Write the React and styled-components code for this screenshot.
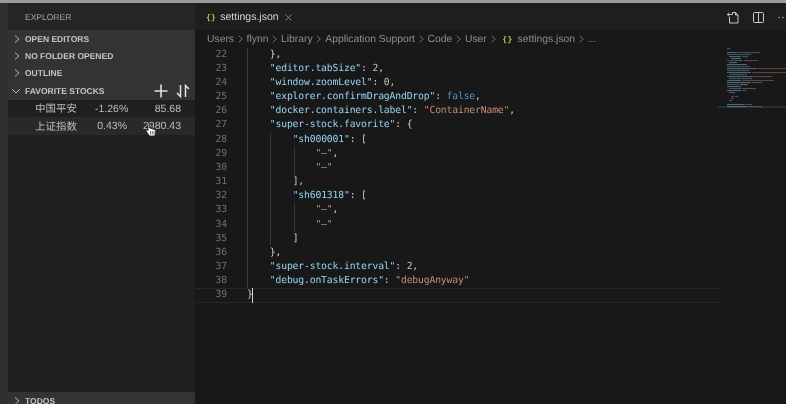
import { Fragment } from 'react';
import styled, { createGlobalStyle } from 'styled-components';

const GlobalStyle = createGlobalStyle`
  html, body {
    margin: 0;
    padding: 0;
    background: #181819;
    text-rendering: geometricPrecision;
  }
`;

const Window = styled.div`
  width: 786px;
  height: 404px;
  overflow: hidden;
  display: flex;
  flex-direction: column;
  background: #181819;
  font-family: "Liberation Sans", Arial, sans-serif;
  position: relative;
  filter: blur(0.3px);
`;

const TitleEdge = styled.div`
  height: 3px;
  flex: none;
  background: #9a9a9a;
`;

const Body = styled.div`
  flex: 1;
  min-height: 0;
  display: flex;
`;

const ActivityBar = styled.div`
  width: 8px;
  flex: none;
  background: #2e2f2f;
`;

const Sidebar = styled.aside`
  width: 187px;
  flex: none;
  display: flex;
  flex-direction: column;
  overflow: hidden;
  background: #1f1f20;
`;

const SidebarTitle = styled.div`
  height: 27px;
  flex: none;
  display: flex;
  align-items: center;
  padding: 1px 0 0 17px;
  box-sizing: border-box;
  background: #252526;
  color: #a6a6a6;
  font-size: 8.5px;
`;

const SectionRow = styled.div`
  height: 17.4px;
  flex: none;
  display: flex;
  align-items: center;
  background: #323333;
  color: #c4c4c4;
  font-size: 8.5px;
  font-weight: 700;
  position: relative;
`;

const Chevron = styled.svg`
  width: 17px;
  height: 12px;
  flex: none;
`;

const HeaderActions = styled.div`
  position: absolute;
  right: 5px;
  top: 2px;
  display: flex;
  align-items: center;
  gap: 8px;
`;

const StockList = styled.div`
  height: 292.5px;
  flex: none;
  padding-top: 0.5px;
  box-sizing: border-box;
`;

const StockRow = styled.div`
  height: 17.4px;
  display: grid;
  grid-template-columns: 60px 32px 1fr;
  align-items: center;
  padding-left: 27px;
  color: #bdbdbd;
  font-size: 10.5px;
  background: ${({ hovered }) => (hovered ? '#28292a' : 'transparent')};
`;

const StockName = styled.span`
  font-family: "Noto Sans CJK SC", "Liberation Sans", sans-serif;
  font-size: 10.5px;
`;

const StockChange = styled.span`
  text-align: right;
`;

const StockPrice = styled.span`
  text-align: right;
  padding-right: 14px;
`;

const Editor = styled.main`
  flex: 1;
  min-width: 0;
  display: flex;
  flex-direction: column;
  background: #181819;
`;

const TabBar = styled.div`
  height: 27px;
  flex: none;
  display: flex;
  align-items: center;
  justify-content: space-between;
  background: #1e1e1f;
`;

const Tab = styled.div`
  display: flex;
  align-items: center;
  gap: 4px;
  padding: 1px 0 0 11px;
  color: #d6d6d6;
  font-size: 10.5px;
`;

const JsonBraces = styled.span`
  color: #c5c04a;
  font-family: "DejaVu Sans Mono", monospace;
  font-size: 8px;
  font-weight: 700;
  letter-spacing: 0.3px;
`;

const CloseMark = styled.svg`
  width: 7px;
  height: 7px;
  margin-left: 2px;
`;

const TabActions = styled.div`
  display: flex;
  align-items: center;
  gap: 14px;
  padding-top: 1px;
`;

const Breadcrumbs = styled.div`
  height: 16px;
  flex: none;
  display: flex;
  align-items: center;
  padding: 2px 0 0 12px;
  box-sizing: border-box;
  color: #8f8f8f;
  font-size: 10.35px;
  white-space: nowrap;
`;

const Separator = styled.svg`
  width: 5px;
  height: 8px;
  margin: 0 3.8px;
  flex: none;
`;

const CrumbBraces = styled(JsonBraces)`
  margin: 0 5px 0 3px;
`;

const EditorBody = styled.div`
  flex: 1;
  min-height: 0;
  display: flex;
`;

const Code = styled.div`
  width: 523px;
  flex: none;
  padding-top: 1.5px;
`;

const Line = styled.div`
  height: 14.18px;
  display: flex;
  font-family: "DejaVu Sans Mono", Menlo, monospace;
  font-size: 9.72px;
  letter-spacing: -0.15px;
  line-height: 14.18px;
  white-space: pre;
  box-sizing: border-box;
  ${({ active }) => active && `
    box-shadow: inset 0 1px 0 #262627, inset 0 -1px 0 #262627;
    margin-right: -1px;
  `}
`;

const LineNumber = styled.span`
  width: 32px;
  flex: none;
  text-align: right;
  color: #6f7273;
`;

const LineText = styled.span`
  margin-left: 20px;
  color: #cdcdcd;
  position: relative;
  flex: 1;
`;

const IndentGuide = styled.i`
  position: absolute;
  top: 0;
  bottom: 0;
  width: 1px;
  background: #39393a;
  left: ${({ level }) => level * 23.4}px;
`;

const JsonKey = styled.span`
  color: #97d6f4;
`;

const JsonString = styled.span`
  color: #c98d70;
`;

const JsonNumber = styled.span`
  color: #b5cea8;
`;

const JsonKeyword = styled.span`
  color: #4f93c9;
`;

const Caret = styled.i`
  position: absolute;
  top: 0;
  bottom: 0;
  left: 5.4px;
  width: 1px;
  background: #d6d6d6;
`;

const Minimap = styled.svg`
  width: 68px;
  height: 70px;
  flex: none;
`;

const HandCursor = styled.svg`
  position: absolute;
  left: 145px;
  top: 122px;
  width: 12px;
  height: 15px;
`;

const SECTIONS = ['OPEN EDITORS', 'NO FOLDER OPENED', 'OUTLINE'];

const STOCKS = [
  { name: '中国平安', change: '-1.26%', price: '85.68', hovered: false },
  { name: '上证指数', change: '0.43%', price: '2980.43', hovered: true },
];

const CRUMBS = ['Users', 'flynn', 'Library', 'Application Support', 'Code', 'User'];

const key = (text) => <JsonKey>{text}</JsonKey>;
const str = (text) => <JsonString>{text}</JsonString>;
const num = (text) => <JsonNumber>{text}</JsonNumber>;

const LINES = [
  { no: 22, depth: 1, code: <>{'    },'}</> },
  { no: 23, depth: 1, code: <>{'    '}{key('"editor.tabSize"')}: {num('2')},</> },
  { no: 24, depth: 1, code: <>{'    '}{key('"window.zoomLevel"')}: {num('0')},</> },
  { no: 25, depth: 1, code: <>{'    '}{key('"explorer.confirmDragAndDrop"')}: <JsonKeyword>false</JsonKeyword>,</> },
  { no: 26, depth: 1, code: <>{'    '}{key('"docker.containers.label"')}: {str('"ContainerName"')},</> },
  { no: 27, depth: 1, code: <>{'    '}{key('"super-stock.favorite"')}: {'{'}</> },
  { no: 28, depth: 2, code: <>{'        '}{key('"sh000001"')}: [</> },
  { no: 29, depth: 3, code: <>{'            '}{str('"–"')},</> },
  { no: 30, depth: 3, code: <>{'            '}{str('"–"')}</> },
  { no: 31, depth: 2, code: <>{'        '}],</> },
  { no: 32, depth: 2, code: <>{'        '}{key('"sh601318"')}: [</> },
  { no: 33, depth: 3, code: <>{'            '}{str('"–"')},</> },
  { no: 34, depth: 3, code: <>{'            '}{str('"–"')}</> },
  { no: 35, depth: 2, code: <>{'        '}]</> },
  { no: 36, depth: 1, code: <>{'    },'}</> },
  { no: 37, depth: 1, code: <>{'    '}{key('"super-stock.interval"')}: {num('2')},</> },
  { no: 38, depth: 1, code: <>{'    '}{key('"debug.onTaskErrors"')}: {str('"debugAnyway"')}</> },
  { no: 39, depth: 0, active: true, code: <>{'}'}</> },
];

const BLUE = '#6f9fb2';
const TEAL = '#557f8c';
const GREY = '#77777a';
const ORANGE = '#8a6652';

// each row of the minimap: pieces of [x, width, colour]
const MINIMAP_ROWS = [
  [[9, 3, GREY]],
  [],
  [[9, 10, BLUE], [20, 22, TEAL]],
  [[9, 24, TEAL]],
  [[11, 12, BLUE], [24, 6, GREY]],
  [[13, 10, BLUE]],
  [[9, 16, TEAL], [26, 14, ORANGE]],
  [[11, 8, BLUE]],
  [[9, 20, BLUE]],
  [[9, 14, TEAL], [24, 8, GREY]],
  [[9, 30, BLUE], [40, 28, ORANGE]],
  [[9, 22, TEAL]],
  [[9, 24, BLUE], [34, 34, ORANGE]],
  [[11, 18, TEAL]],
  [[9, 26, BLUE], [36, 18, ORANGE]],
  [[11, 12, TEAL], [24, 10, GREY]],
  [[9, 14, BLUE], [24, 32, ORANGE]],
  [[9, 24, BLUE], [34, 10, GREY]],
  [[9, 12, TEAL], [22, 8, BLUE]],
  [[9, 14, BLUE]],
  [[11, 12, TEAL], [24, 14, GREY]],
  [[9, 14, BLUE], [24, 4, GREY]],
  [[11, 6, GREY]],
  [],
  [[13, 3, ORANGE], [17, 3, GREY]],
  [[13, 3, ORANGE]],
  [[11, 3, GREY]],
  [],
  [[9, 18, BLUE], [28, 6, GREY]],
  [[9, 20, BLUE], [30, 14, ORANGE]],
];

function RightChevron() {
  return (
    <Chevron viewBox="0 0 17 12">
      <path d="M7 2.5 L11 6 L7 9.5" fill="none" stroke="#b5b5b5" strokeWidth="1" />
    </Chevron>
  );
}

function DownChevron() {
  return (
    <Chevron viewBox="0 0 17 12">
      <path d="M4 4 L8 8 L12 4" fill="none" stroke="#b5b5b5" strokeWidth="1" />
    </Chevron>
  );
}

function CrumbSeparator() {
  return (
    <Separator viewBox="0 0 5 8">
      <path d="M.7 .7 L4.3 4 L.7 7.3" fill="none" stroke="#7c7c7c" strokeWidth=".9" />
    </Separator>
  );
}

function PlusIcon() {
  return (
    <svg width="14" height="14" viewBox="0 0 14 14">
      <path d="M7 .5 V13.5 M.5 7 H13.5" stroke="#e2e2e2" strokeWidth="1.6" />
    </svg>
  );
}

function SortIcon() {
  return (
    <svg width="14" height="14" viewBox="0 0 14 14" fill="none" stroke="#e2e2e2" strokeWidth="1.5">
      <path d="M4.5 1 V12.5 L1 9 M9.5 13 V1.5 L13 5" />
    </svg>
  );
}

function OpenSettingsIcon() {
  return (
    <svg width="13" height="13" viewBox="0 0 13 13" fill="none" stroke="#c8c8c8" strokeWidth="1">
      <path d="M3.5 6 V12 H12 V4 L9.5 1.5 H6.5 V3.5 H1.5 M9.5 1.5 V4 H12" />
      <path d="M3.2 1.6 L1.2 3.5 L3.2 5.4" />
    </svg>
  );
}

function SplitIcon() {
  return (
    <svg width="11" height="11" viewBox="0 0 11 11" fill="none" stroke="#c8c8c8" strokeWidth="1">
      <rect x=".5" y=".5" width="10" height="10" rx="1" />
      <path d="M5.5 .5 V10.5" />
    </svg>
  );
}

function MoreIcon() {
  return (
    <svg width="8" height="11" viewBox="0 0 8 11" fill="#a8a8a8">
      <circle cx="1" cy="5.5" r=".8" />
      <circle cx="5" cy="5.5" r=".8" />
    </svg>
  );
}

export default function App() {
  return (
    <Window>
      <GlobalStyle />
      <TitleEdge />
      <Body>
        <ActivityBar />
        <Sidebar>
          <SidebarTitle>EXPLORER</SidebarTitle>
          {SECTIONS.map((section) => (
            <SectionRow key={section}>
              <RightChevron />
              {section}
            </SectionRow>
          ))}
          <SectionRow>
            <DownChevron />
            FAVORITE STOCKS
            <HeaderActions>
              <PlusIcon />
              <SortIcon />
            </HeaderActions>
          </SectionRow>
          <StockList>
            {STOCKS.map((stock) => (
              <StockRow key={stock.name} hovered={stock.hovered}>
                <StockName>{stock.name}</StockName>
                <StockChange>{stock.change}</StockChange>
                <StockPrice>{stock.price}</StockPrice>
              </StockRow>
            ))}
          </StockList>
          <SectionRow>
            <RightChevron />
            TODOS
          </SectionRow>
        </Sidebar>
        <Editor>
          <TabBar>
            <Tab>
              <JsonBraces>{'{}'}</JsonBraces>
              settings.json
              <CloseMark viewBox="0 0 7 7">
                <path d="M.5 .5 L6.5 6.5 M6.5 .5 L.5 6.5" stroke="#9a9a9a" strokeWidth="0.8" />
              </CloseMark>
            </Tab>
            <TabActions>
              <OpenSettingsIcon />
              <SplitIcon />
              <MoreIcon />
            </TabActions>
          </TabBar>
          <Breadcrumbs>
            {CRUMBS.map((crumb) => (
              <Fragment key={crumb}>
                <span>{crumb}</span>
                <CrumbSeparator />
              </Fragment>
            ))}
            <CrumbBraces>{'{}'}</CrumbBraces>
            <span>settings.json</span>
            <CrumbSeparator />
            <span>...</span>
          </Breadcrumbs>
          <EditorBody>
            <Code>
              {LINES.map((line) => (
                <Line key={line.no} active={line.active}>
                  <LineNumber>{line.no}</LineNumber>
                  <LineText>
                    {Array.from({ length: line.depth }, (_, level) => (
                      <IndentGuide key={level} level={level} />
                    ))}
                    {line.code}
                    {line.active && <Caret />}
                  </LineText>
                </Line>
              ))}
            </Code>
            <Minimap viewBox="0 0 68 70">
              <rect x="0" y="60" width="68" height="2" fill="#1f3036" />
              {MINIMAP_ROWS.map((pieces, row) => pieces.map(([x, width, color]) => (
                <rect key={`${row}-${x}`} x={x} y={2 + row * 2} width={width} height="1.1" fill={color} opacity="0.6" />
              )))}
            </Minimap>
          </EditorBody>
        </Editor>
      </Body>
      <HandCursor viewBox="0 0 12 15">
        <path d="M3 1.5 C3 .5 4.6 .5 4.6 1.5 V6 L9.5 7.5 C11 8 11 9.5 10.6 11 L9.8 14 H4.5 L1 9 C.6 8 1.6 7.4 2.4 8 L3 8.8 Z" fill="#fff" stroke="#111" strokeWidth=".8" />
        <path d="M5.5 9 V12.5 M7.3 9 V12.5 M9 9 V12.5" stroke="#333" strokeWidth=".7" />
      </HandCursor>
    </Window>
  );
}
